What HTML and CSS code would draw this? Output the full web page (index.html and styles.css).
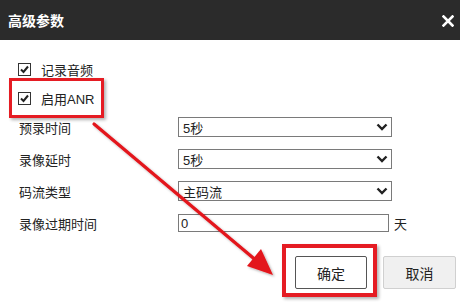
FILE: index.html
```html
<!DOCTYPE html>
<html lang="zh-CN">
<head>
  <meta charset="UTF-8" />
  <title>高级参数</title>
  <link rel="stylesheet" href="styles.css">
</head>
<body>
  <div class="dialog">
    <!-- Title bar -->
    <div class="titlebar">
      <span class="title">高级参数</span>
      <svg class="close" width="12" height="12" viewBox="0 0 12 12">
        <path d="M1.5 1.5 L10.5 10.5 M10.5 1.5 L1.5 10.5" stroke="#fff" stroke-width="2.6" stroke-linecap="square"/>
      </svg>
    </div>

    <div class="content">
      <div class="check-row">
        <span class="checkbox">
          <svg width="11" height="11" viewBox="0 0 11 11"><path d="M2 5.5 L4.5 8 L9 2.5" fill="none" stroke="#222" stroke-width="2"/></svg>
        </span>
        <span>记录音频</span>
      </div>
      <div class="check-row">
        <span class="highlight anr">
          <span class="checkbox">
            <svg width="11" height="11" viewBox="0 0 11 11"><path d="M2 5.5 L4.5 8 L9 2.5" fill="none" stroke="#222" stroke-width="2"/></svg>
          </span>
          <span>启用ANR</span>
        </span>
      </div>

      <div class="fields">
        <div class="field">
          <span class="label">预录时间</span>
          <div class="select">5秒<svg width="12" height="8" viewBox="0 0 12 8"><path d="M1.5 1.5 L6 6 L10.5 1.5" fill="none" stroke="#222" stroke-width="2.4"/></svg></div>
        </div>
        <div class="field">
          <span class="label">录像延时</span>
          <div class="select">5秒<svg width="12" height="8" viewBox="0 0 12 8"><path d="M1.5 1.5 L6 6 L10.5 1.5" fill="none" stroke="#222" stroke-width="2.4"/></svg></div>
        </div>
        <div class="field">
          <span class="label">码流类型</span>
          <div class="select">主码流<svg width="12" height="8" viewBox="0 0 12 8"><path d="M1.5 1.5 L6 6 L10.5 1.5" fill="none" stroke="#222" stroke-width="2.4"/></svg></div>
        </div>
        <div class="field">
          <span class="label">录像过期时间</span>
          <div class="text-input">0</div>
          <span class="unit">天</span>
        </div>
      </div>

      <div class="buttons">
        <span class="highlight ok-wrap">
          <button class="btn btn-ok">确定</button>
        </span>
        <button class="btn btn-cancel">取消</button>
      </div>
    </div>

    <!-- Annotation arrow -->
    <svg class="arrow" width="460" height="304" viewBox="0 0 460 304">
      <g filter="url(#shade)">
        <line x1="94" y1="124" x2="258" y2="262" stroke="#e3141b" stroke-width="3.2" stroke-linecap="round"/>
        <polygon points="273,275 247,266 261,249" fill="#e3141b"/>
      </g>
      <defs>
        <filter id="shade" x="-10%" y="-10%" width="130%" height="130%">
          <feDropShadow dx="1.5" dy="1.5" stdDeviation="1.2" flood-color="#000" flood-opacity="0.3"/>
        </filter>
      </defs>
    </svg>
  </div>
</body>
</html>
```

FILE: styles.css
```css
* {
  margin: 0;
  padding: 0;
  box-sizing: border-box;
}

body {
  font-family: "Liberation Sans", "Noto Sans CJK SC", sans-serif;
  font-size: 13px;
  color: #222;
  background: #fff;
}

.dialog {
  position: relative;
  width: 460px;
  height: 304px;
  overflow: hidden;
}

/* Title bar */
.titlebar {
  height: 40px;
  background-color: #2b2b2b;
  display: flex;
  align-items: center;
  justify-content: space-between;
  padding: 0 6px 0 8px;
}

.title {
  color: #fff;
  font-size: 14px;
  font-weight: bold;
}

.close {
  margin-top: 1px;
}

.content {
  padding: 15px 0 0 18px;
}

/* Checkboxes */
.check-row {
  height: 28px;
  display: flex;
  align-items: center;
}

.check-row + .check-row {
  margin-top: 1px;
}

.check-row > span,
.anr {
  display: inline-flex;
  align-items: center;
}

.checkbox {
  width: 13px;
  height: 13px;
  border: 1px solid #333;
  background: #fff;
  display: inline-flex;
  align-items: center;
  justify-content: center;
  margin-right: 10px;
}

/* Red annotation boxes */
.highlight {
  position: relative;
}

.highlight::after {
  content: "";
  position: absolute;
  border: 3px solid #e51c23;
  box-shadow: 2px 2px 3px rgba(0, 0, 0, 0.3);
}

.anr::after {
  left: -9px;
  right: -10px;
  top: -11px;
  bottom: -10px;
}

.ok-wrap::after {
  left: -13px;
  right: -10px;
  top: -12px;
  bottom: -8px;
  border-width: 4px;
}

/* Form rows */
.fields {
  margin-top: -1px;
}

.field {
  height: 32px;
  display: flex;
  align-items: center;
}

.label {
  width: 160px;
  padding-left: 1px;
}

.select {
  width: 214px;
  height: 20px;
  border: 1px solid #7a7a7a;
  display: flex;
  align-items: center;
  justify-content: space-between;
  padding: 0 3px 0 4px;
  font-size: 13px;
}

.text-input {
  width: 211px;
  height: 18px;
  border: 1px solid #7a7a7a;
  display: flex;
  align-items: center;
  padding-left: 2px;
}

.unit {
  margin-left: 5px;
}

/* Buttons */
.buttons {
  display: flex;
  justify-content: flex-end;
  gap: 16px;
  margin-top: 17px;
  padding-right: 4px;
}

.btn {
  font-family: inherit;
  font-size: 14px;
  color: #222;
  height: 33px;
  border-radius: 2px;
}

.btn-ok {
  width: 72px;
  background: #fff;
  border: 1px solid #555;
  display: block;
}

.btn-cancel {
  width: 73px;
  background: #f0f0f0;
  border: 1px solid #d0d0d0;
}

.arrow {
  position: absolute;
  left: 0;
  top: 0;
  pointer-events: none;
}
```
